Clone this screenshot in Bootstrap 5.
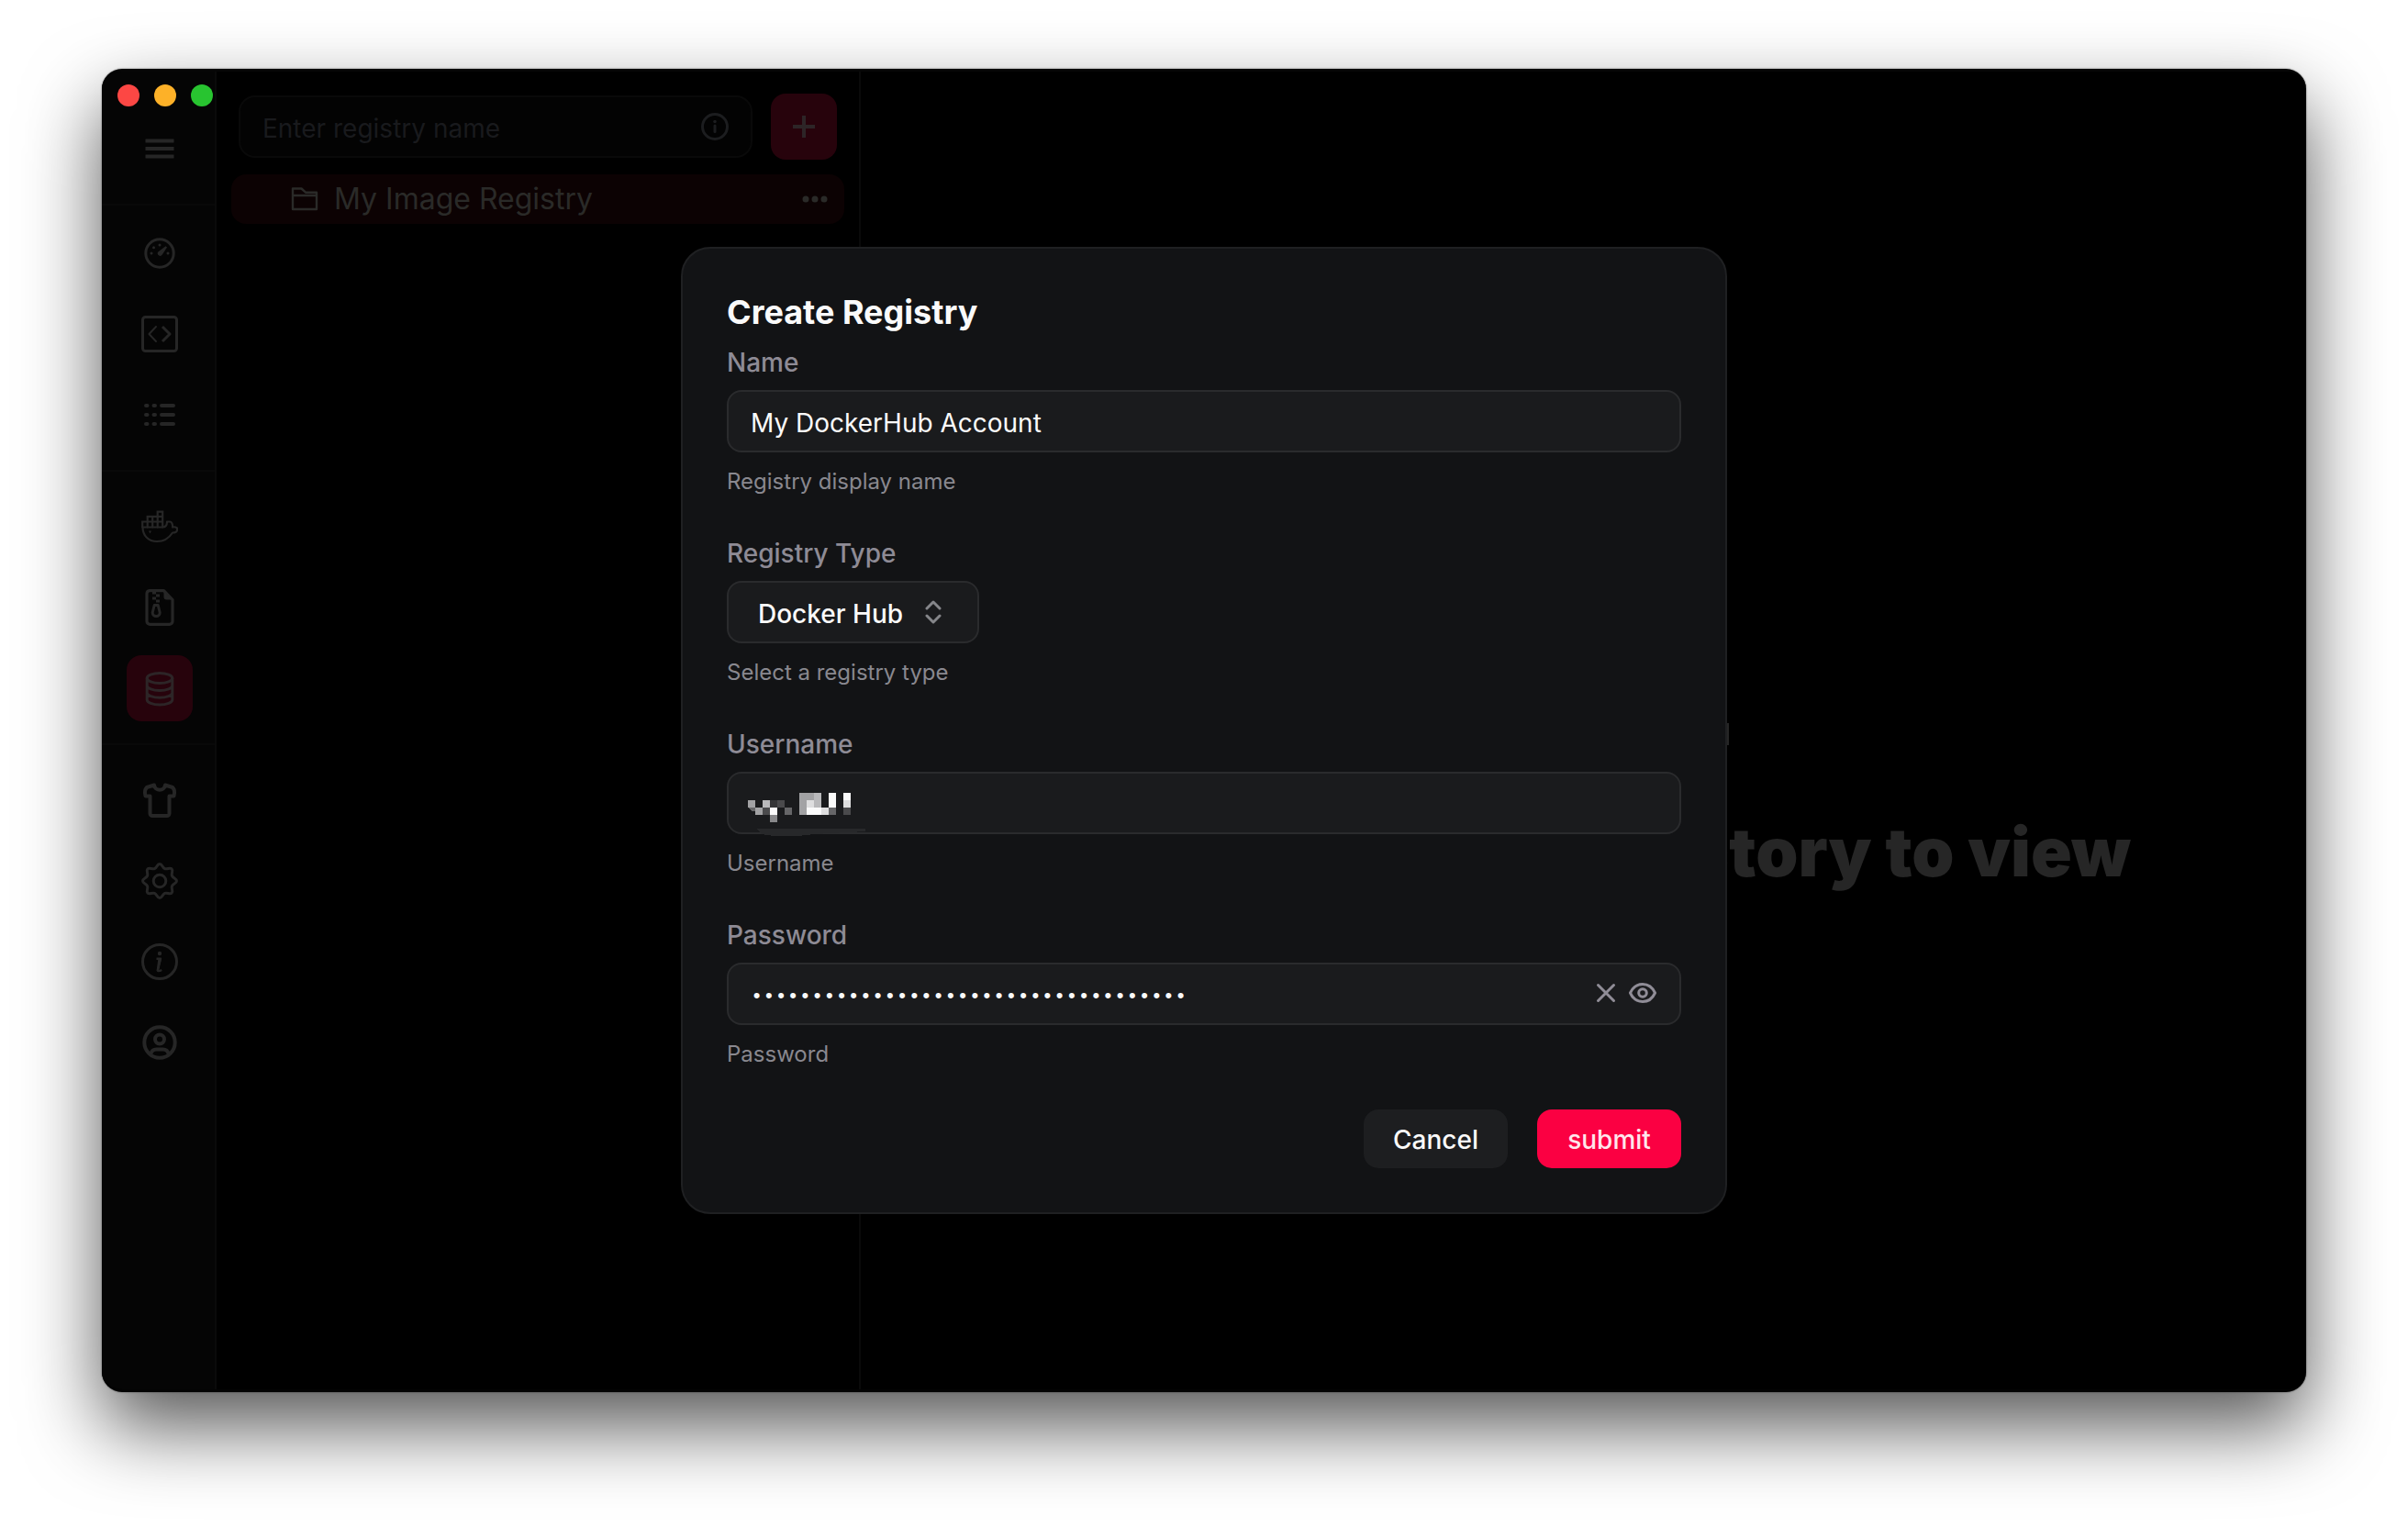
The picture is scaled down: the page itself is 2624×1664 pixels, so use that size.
<!DOCTYPE html>
<html lang="en">
<head>
<meta charset="utf-8">
<meta name="viewport" content="width=device-width, initial-scale=1">
<title>Create Registry</title>
<link href="https://cdn.jsdelivr.net/npm/bootstrap@5.3.0/dist/css/bootstrap.min.css" rel="stylesheet">
<style>
  body { font-family: Inter, "Liberation Sans", sans-serif; font-size: 28px; background: #fff; }
  .desktop { min-height: 100vh; padding: 75px 111px 147px; }
  .app-window { background: #000; border-radius: 22px; border-top: 3px solid #060606; border-bottom: 3px solid #030303;
    box-shadow: 0 0 2px rgba(0,0,0,.5), 0 38px 84px rgba(0,0,0,.66); }

  .side-rail { width: 125px; background: #050505; border-right: 2px solid #0a0a0a; color: #262626; }
  .traffic { padding: 14px 0 10px 17px; gap: 16px; }
  .traffic span { width: 24px; height: 24px; border-radius: 50%; }
  .t-close { background: #fc4744; } .t-min { background: #fdb128; } .t-max { background: #28c430; }
  .rail-group { padding: 24px 0 24px 3px; gap: 16px; border-top: 2px solid #090909; }
  .rail-group.rail-first { border-top: 0; padding-top: 0; }
  .rail-group.rail-main { padding-top: 16px; }
  .square-btn { width: 72px; height: 72px; padding: 0; border: 0; border-radius: 16px; background: transparent; color: inherit; }
  .square-btn.is-active { background: #27030c; color: #2d2527; }
  .square-btn svg { width: 40px; height: 40px; }
  svg { flex: none; display: block; fill: none; stroke: currentColor; stroke-linecap: round; stroke-linejoin: round; }
  svg .solid { fill: currentColor; stroke: none; }

  .list-panel { width: 702px; border-right: 2px solid #0a0a0a; color: #262626; }
  .search-row { padding: 24px 24px 16px; gap: 20px; }
  .search-box { height: 68px; border: 2px solid #090909; border-radius: 18px; background: #030303; padding: 0 24px; color: #1c1d1f; }
  .search-box input { min-width: 0; border: 0; background: transparent; color: #262626; outline: 0; padding: 4px 0 0; }
  .search-box input::placeholder { color: #191a1d; opacity: 1; }
  .registry-row { height: 54px; margin: 0 16px; padding: 0 18px 0 64px; gap: 16px; border-radius: 16px; background: #0c0203; color: #2a2a28; font-size: 32px; text-decoration: none; }

  .empty-state { gap: 16px; color: #262626; padding-top: 8px; }
  .empty-state h1 { font-size: 74px; line-height: 80px; font-weight: 900; white-space: nowrap; margin: 0; font-optical-sizing: none; }

  .dialog-layer { position: absolute; inset: 0; }
  .registry-dialog { width: 1140px; padding: 48px; background: #121315; border: 2px solid #1f2022; border-radius: 32px; color: #fafafa; }
  .registry-dialog h2 { font-size: 36px; line-height: 42px; font-weight: 700; margin: 0 0 20px; }
  .field-stack { gap: 48px; }
  .field { gap: 16px; }
  .field label { font-size: 28px; line-height: 28px; font-weight: 500; color: #8e8b95; }
  .field small { font-size: 24px; line-height: 32px; color: #89888f; }
  .text-box { height: 68px; border: 2px solid #2a2b2d; border-radius: 16px; background: #1a1b1d; color: #fafafa; padding: 4px 24px 0; width: 100%; outline: 0; }
  .type-picker { width: 275px; }
  .type-picker select { appearance: none; font-weight: 500; padding-left: 32px; }
  .type-picker svg { position: absolute; right: 41px; top: 20px; color: #85868a; pointer-events: none; }
  .secret-box { padding: 6px 130px 0 24px; font-family: "Liberation Mono", monospace; font-size: 22px; }
  .secret-tools { position: absolute; right: 26px; top: 17px; gap: 8px; color: #908d97; }
  .secret-tools button { border: 0; padding: 0; background: transparent; color: inherit; }
  .pixel-mask { position: absolute; left: 23px; top: 23px; stroke: none; }
  .dialog-actions { gap: 32px; margin-top: 44px; }
  .dialog-actions button { width: 157px; height: 64px; border: 0; border-radius: 16px; font-size: 28px; font-weight: 500; padding: 2px 0 0; }
  .act-cancel { background: #1d1e20; color: #fafafa; }
  .act-submit { background: #fb0042; color: #ffe6ec; }
</style>
<script src="https://cdn.jsdelivr.net/npm/bootstrap@5.3.0/dist/js/bootstrap.bundle.min.js"></script>
</head>
<body>
<div class="desktop d-flex">
  <div class="app-window d-flex flex-fill position-relative overflow-hidden">

    <nav class="side-rail d-flex flex-column flex-shrink-0" aria-label="Main">
      <div class="traffic d-flex"><span class="t-close"></span><span class="t-min"></span><span class="t-max"></span></div>
      <div class="rail-group rail-first d-flex flex-column align-items-center">
        <button class="square-btn d-flex align-items-center justify-content-center" aria-label="Menu"><svg viewBox="0 0 40 40"><path class="solid" d="M4.500 9.500h31v4h-31zM4.500 18h31v4h-31zM4.500 26.500h31v4h-31z"/></svg></button>
      </div>
      <div class="rail-group rail-main d-flex flex-column align-items-center">
        <button class="square-btn d-flex align-items-center justify-content-center" aria-label="Dashboard"><svg viewBox="0 0 40 40" stroke-width="3"><circle cx="20" cy="20" r="15.200"/><path class="solid" d="M26.500 12.300L28 13.500 22.800 21.600A2.700 2.700 0 1 1 18.300 18.500Z"/><g class="solid"><circle cx="20" cy="11" r="1.500"/><circle cx="13.500" cy="13.700" r="1.500"/><circle cx="11" cy="20" r="1.500"/><circle cx="29" cy="20" r="1.500"/></g></svg></button>
        <button class="square-btn d-flex align-items-center justify-content-center" aria-label="Code"><svg viewBox="0 0 40 40" stroke-width="3"><rect x="1.500" y="1.500" width="37" height="37" rx="3"/><path stroke-width="2" d="M16 12l-7.500 8 7.500 8"/><path stroke-linecap="butt" d="M23 12l8 8-8 8"/></svg></button>
        <button class="square-btn d-flex align-items-center justify-content-center" aria-label="List"><svg viewBox="0 0 40 40" stroke-width="4"><path d="M5 10h1.500M13.500 10h1.500M22 10h13M5 20h1.500M13.500 20h1.500M22 20h13M5 30h1.500M13.500 30h1.500M22 30h13"/></svg></button>
      </div>
      <div class="rail-group d-flex flex-column align-items-center">
        <button class="square-btn d-flex align-items-center justify-content-center" aria-label="Docker"><svg viewBox="0 0 40 40" stroke-width="2.200"><path d="M1.500 20.500C1.500 30 8 36 17 36C25 36 30.500 32 34 26.500C37 26.500 39 25.500 39 23.500V21.500C37 20 35.500 20 34 20.500C34.300 17 33 14.500 31 14.500H28C28 18 26.500 20.500 23 20.500Z"/><path stroke-linejoin="miter" d="M1.200 20.500v-6h22v6M6.700 14.500v6M12.200 8.800v11.700M17.700 3.500v17M6.700 14.500v-5.700h16.500v5.700M17.700 9v-5.300h5.500v5"/><path class="solid" d="M8 24.500h3l-1.500 3z"/></svg></button>
        <button class="square-btn d-flex align-items-center justify-content-center" aria-label="Archives"><svg viewBox="0 0 40 40" stroke-width="3.200"><path d="M9 1.600h15.500L34 11.500V35a3.400 3.400 0 0 1-3.400 3.400H9.400A3.400 3.400 0 0 1 6 35V5a3.400 3.400 0 0 1 3-3.400z"/><path class="solid" d="M24.500 2v6.500a3 3 0 0 0 3 3H34z"/><path class="solid" d="M12 2.500h4v3h-4zM16 5.500h4v3h-4zM12 8.500h4v3h-4zM16 11.500h4v3h-4z"/><path stroke-width="3" d="M14.200 17.500h4l2 8a4 4 0 0 1-8 0z"/></svg></button>
        <button class="square-btn is-active d-flex align-items-center justify-content-center" aria-label="Registries"><svg viewBox="0 0 40 40" stroke-width="3"><ellipse cx="20" cy="9" rx="13.800" ry="5.500"/><path d="M6.200 9v23.500c0 3 6.200 5.500 13.800 5.500s13.800-2.500 13.800-5.500V9M6.200 17c0 3 6.200 5.500 13.800 5.500s13.800-2.500 13.800-5.500M6.200 24.700c0 3 6.200 5.500 13.800 5.500s13.800-2.500 13.800-5.500"/></svg></button>
      </div>
      <div class="rail-group d-flex flex-column align-items-center">
        <button class="square-btn d-flex align-items-center justify-content-center" aria-label="Theme"><svg viewBox="0 0 40 40" stroke-width="4"><path d="M14 3.500C15 10.500 25 10.500 26 3.500L34 6C36 8 36.500 12 35.500 15.500H30.500V34.500a2.500 2.500 0 0 1-2.500 2.500H12a2.500 2.500 0 0 1-2.500-2.500V15.500H4.500C3.500 12 4 8 6 6Z"/></svg></button>
        <button class="square-btn d-flex align-items-center justify-content-center" aria-label="Settings"><svg viewBox="0 0 40 40" stroke-width="3"><circle cx="20" cy="20" r="6.800"/><path d="M20 1.500C23 1.500 22.800 5.450 25.550 6.600C28.300 7.750 31 4.800 33.100 6.900C35.200 9 32.250 11.700 33.400 14.450C34.550 17.200 38.500 17 38.500 20C38.500 23 34.550 22.800 33.400 25.550C32.250 28.300 35.200 31 33.100 33.100C31 35.200 28.300 32.250 25.550 33.400C22.800 34.550 23 38.500 20 38.500C17 38.500 17.200 34.550 14.450 33.400C11.700 32.250 9 35.200 6.900 33.100C4.800 31 7.750 28.300 6.600 25.550C5.450 22.800 1.500 23 1.500 20C1.500 17 5.450 17.200 6.600 14.450C7.750 11.700 4.800 9 6.900 6.900C9 4.800 11.700 7.750 14.450 6.600C17.200 5.450 17 1.500 20 1.500Z"/></svg></button>
        <button class="square-btn d-flex align-items-center justify-content-center" aria-label="About"><svg viewBox="0 0 40 40" stroke-width="3"><circle cx="20" cy="20" r="18.500"/><circle class="solid" cx="20" cy="11" r="2.200"/><path stroke-width="2.400" stroke-linecap="butt" d="M16.500 16.700h4.500l-3 12.500c-.4 1.600 2 1 4.200-.2"/><path class="solid" d="M18.500 16h3.500l-3 12.500-2.500 1.500z"/></svg></button>
        <button class="square-btn d-flex align-items-center justify-content-center" aria-label="Account"><svg viewBox="0 0 40 40" stroke-width="4"><circle cx="20" cy="20" r="16.700"/><circle cx="20" cy="16.500" r="5"/><path d="M10.500 32c1-4 3.500-4.500 6-4.500h7c2.500 0 5 .5 6 4.500"/></svg></button>
      </div>
    </nav>

    <section class="list-panel flex-shrink-0">
      <div class="search-row d-flex align-items-center">
        <div class="search-box d-flex align-items-center flex-fill">
          <input class="flex-fill" type="text" placeholder="Enter registry name" aria-label="Registry name">
          <svg width="30" height="30" viewBox="0 0 30 30" stroke-width="3"><circle cx="15" cy="15" r="13.500"/><path d="M15 14v6.500"/><circle class="solid" cx="15" cy="9.500" r="1.800"/></svg>
        </div>
        <button class="square-btn is-active d-flex align-items-center justify-content-center" aria-label="Add registry"><svg viewBox="0 0 40 40"><path class="solid" d="M18 8h4v10h10v4H22v10h-4V22H8v-4h10z"/></svg></button>
      </div>
      <a href="#" class="registry-row d-flex align-items-center">
        <svg width="32" height="32" viewBox="0 0 32 32" stroke-width="2.400"><path d="M3 27V4.500h9.500l4.500 4.200h12V27zM3 12h26"/></svg>
        <span class="flex-fill">My Image Registry</span>
        <svg width="28" height="8" viewBox="0 0 28 8"><g class="solid"><circle cx="4" cy="4" r="3.500"/><circle cx="14" cy="4" r="3.500"/><circle cx="24" cy="4" r="3.500"/></g></svg>
      </a>
    </section>

    <main class="empty-state flex-fill d-flex flex-column align-items-center justify-content-center">
      <svg width="316" height="240" viewBox="0 0 316 240" stroke-width="16"><path d="M8 100h40v-44h44v-44h44v88h130M8 100c0 90 60 132 126 132 70 0 110-30 130-64"/><path class="solid" d="M260 156h56v24h-56z"/></svg>
      <h1>Please select a directory to view</h1>
    </main>

    <div class="dialog-layer d-flex align-items-center justify-content-center">
      <form class="registry-dialog" role="dialog" aria-labelledby="dlg-title">
        <h2 id="dlg-title">Create Registry</h2>
        <div class="field-stack d-flex flex-column">
          <div class="field d-flex flex-column">
            <label for="reg-name">Name</label>
            <input class="text-box" id="reg-name" type="text" value="My DockerHub Account">
            <small>Registry display name</small>
          </div>
          <div class="field d-flex flex-column">
            <label for="reg-type">Registry Type</label>
            <div class="type-picker position-relative">
              <select class="text-box d-block" id="reg-type"><option>Docker Hub</option></select>
              <svg width="18" height="28" viewBox="0 0 18 28" stroke-width="3"><path d="M2 10l7-7 7 7M2 18l7 7 7-7"/></svg>
            </div>
            <small>Select a registry type</small>
          </div>
          <div class="field d-flex flex-column">
            <label for="reg-user">Username</label>
            <div class="position-relative">
              <input class="text-box d-block" id="reg-user" type="text">
              <svg class="pixel-mask" width="130" height="48" viewBox="0 0 130 48" shape-rendering="crispEdges">
                <path fill="#27282a" d="M9 39h119v3l-55 3c-20 3-45 3-58 0z"/>
                <path fill="#fafafa" d="M88 0h8v16h-8zM104 0h8v8h-8zM64 16h16v8h-16zM24 16h8v8h-8z"/>
                <path fill="#a2a2a4" d="M56 0h8v24h-8zM64 0h8v8h-8zM0 8h8v8h-8zM8 16h8v8h-8z"/>
                <path fill="#b9b9bb" d="M72 0h8v16h-8zM16 8h8v8h-8z"/>
                <path fill="#dededf" d="M64 8h8v8h-8zM104 8h8v8h-8zM80 16h8v8h-8z"/>
                <path fill="#353537" d="M24 8h8v8h-8z"/>
                <path fill="#4a4a4c" d="M32 8h8v8h-8zM16 16h8v8h-8zM104 16h8v8h-8z"/>
                <path fill="#666668" d="M0 16h8v4h-4zM40 16h8v8h-8zM88 16h8v8h-8z"/>
                <path fill="#88888a" d="M24 24h8v8h-8z"/>
              </svg>
            </div>
            <small>Username</small>
          </div>
          <div class="field d-flex flex-column">
            <label for="reg-pass">Password</label>
            <div class="position-relative">
              <input class="text-box secret-box d-block" id="reg-pass" type="password" value="abcdefghijklmnopqrstuvwxyz0123456789">
              <div class="secret-tools d-flex">
                <button type="button" aria-label="Clear"><svg width="32" height="32" viewBox="0 0 32 32" stroke-width="3"><path d="M7.500 7.500l17 17M24.500 7.500l-17 17"/></svg></button>
                <button type="button" aria-label="Show password"><svg width="32" height="32" viewBox="0 0 32 32" stroke-width="3"><path d="M2.500 16C5.500 9.500 10 6.500 16 6.500S26.500 9.500 29.500 16C26.500 22.500 22 25.500 16 25.500S5.500 22.500 2.500 16Z"/><circle cx="16" cy="16" r="4.300"/></svg></button>
              </div>
            </div>
            <small>Password</small>
          </div>
        </div>
        <div class="dialog-actions d-flex justify-content-end">
          <button type="button" class="act-cancel">Cancel</button>
          <button type="submit" class="act-submit">submit</button>
        </div>
      </form>
    </div>
  </div>
</div>
</body>
</html>
